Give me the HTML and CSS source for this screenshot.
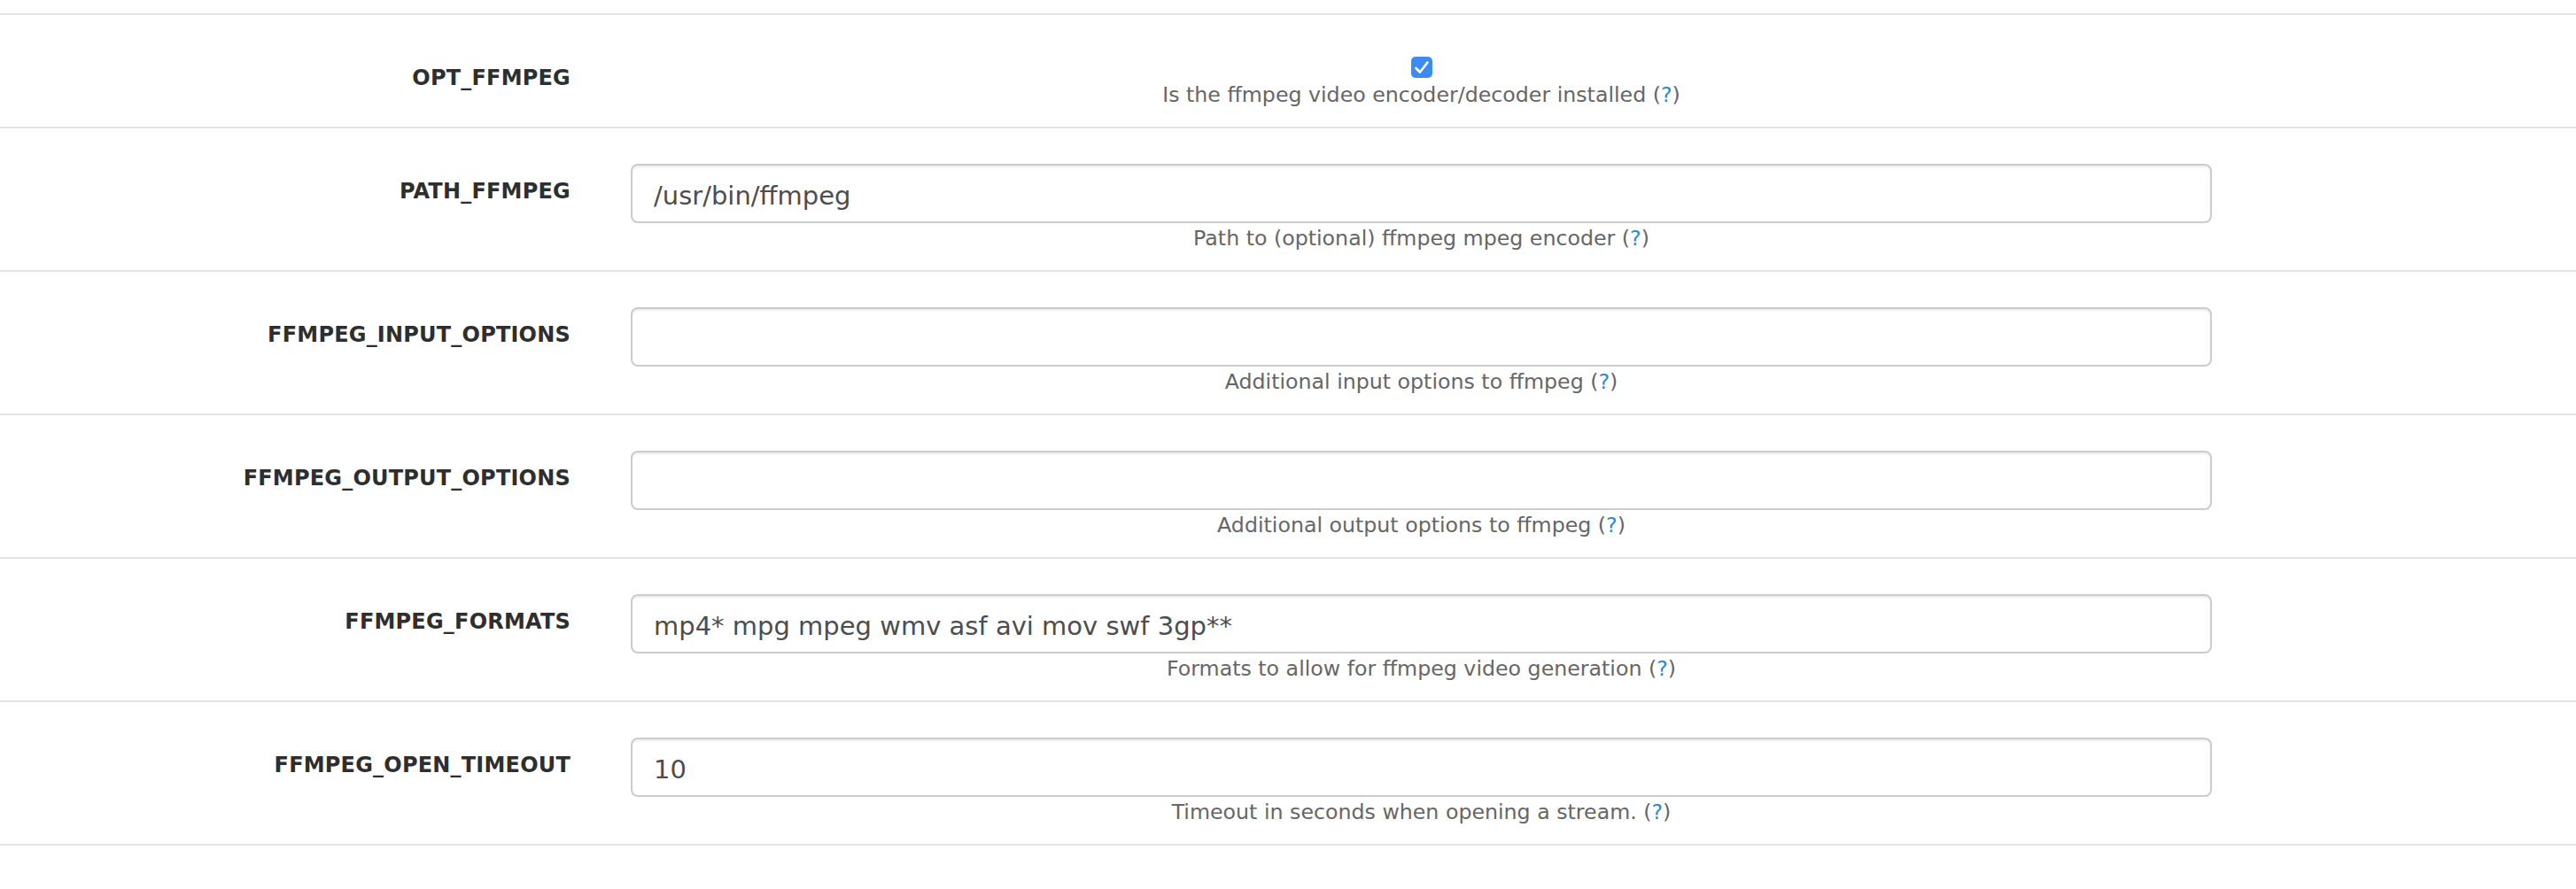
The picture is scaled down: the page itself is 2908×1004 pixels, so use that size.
FILE: index.html
```html
<!DOCTYPE html>
<html lang="en">
<head>
    <meta charset="UTF-8">
    <meta name="viewport" content="width=device-width, initial-scale=1.0">
    <title>Options - Images</title>
    <link rel="stylesheet" href="styles.css">
</head>
<body>
    <form class="options">
        <div class="option">
            <label class="name" for="opt_ffmpeg">OPT_FFMPEG</label>
            <div class="value">
                <span class="check" id="opt_ffmpeg">
                    <svg width="24" height="24" viewBox="0 0 24 24"><path d="M5.5 13 L10 17.5 L18.5 6.5" fill="none" stroke="#fff" stroke-width="2.6" stroke-linecap="round" stroke-linejoin="round"/></svg>
                </span>
                <p class="help">Is the ffmpeg video encoder/decoder installed (<a href="#">?</a>)</p>
            </div>
        </div>
        <div class="option">
            <label class="name" for="path_ffmpeg">PATH_FFMPEG</label>
            <div class="value">
                <input type="text" id="path_ffmpeg" value="/usr/bin/ffmpeg">
                <p class="help">Path to (optional) ffmpeg mpeg encoder (<a href="#">?</a>)</p>
            </div>
        </div>
        <div class="option">
            <label class="name" for="ffmpeg_input_options">FFMPEG_INPUT_OPTIONS</label>
            <div class="value">
                <input type="text" id="ffmpeg_input_options" value="">
                <p class="help">Additional input options to ffmpeg (<a href="#">?</a>)</p>
            </div>
        </div>
        <div class="option">
            <label class="name" for="ffmpeg_output_options">FFMPEG_OUTPUT_OPTIONS</label>
            <div class="value">
                <input type="text" id="ffmpeg_output_options" value="">
                <p class="help">Additional output options to ffmpeg (<a href="#">?</a>)</p>
            </div>
        </div>
        <div class="option">
            <label class="name" for="ffmpeg_formats">FFMPEG_FORMATS</label>
            <div class="value">
                <input type="text" id="ffmpeg_formats" value="mp4* mpg mpeg wmv asf avi mov swf 3gp**">
                <p class="help">Formats to allow for ffmpeg video generation (<a href="#">?</a>)</p>
            </div>
        </div>
        <div class="option">
            <label class="name" for="ffmpeg_open_timeout">FFMPEG_OPEN_TIMEOUT</label>
            <div class="value">
                <input type="text" id="ffmpeg_open_timeout" value="10">
                <p class="help">Timeout in seconds when opening a stream. (<a href="#">?</a>)</p>
            </div>
        </div>
    </form>
</body>
</html>
```

FILE: styles.css
```css
body {
    margin: 0;
    font-family: "DejaVu Sans", Verdana, sans-serif;
    font-size: 24px;
    color: #333;
    background: #fff;
}
.options {
    padding-top: 15px;
}
.option {
    display: grid;
    grid-template-columns: 644px 1785px;
    column-gap: 68px;
    padding: 40px 0 19px;
    border-top: 2px solid #e3e3e3;
}
.option:last-child {
    border-bottom: 2px solid #e3e3e3;
}
.name {
    text-align: right;
    font-weight: bold;
    line-height: 34px;
    padding-top: 14px;
    color: #2e2e2e;
    letter-spacing: 0.2px;
}
.value {
    text-align: center;
}
.check {
    display: block;
    width: 24px;
    height: 24px;
    margin: 7px auto 2px;
    background: #3a8bf4;
    border-radius: 5px;
}
.check svg {
    display: block;
}
input[type="text"] {
    display: block;
    box-sizing: border-box;
    width: 100%;
    height: 67px;
    margin: 0;
    padding: 5px 24px 0;
    font-family: "DejaVu Sans", Verdana, sans-serif;
    font-size: 29px;
    color: #4d4d4d;
    border: 2px solid #ccc;
    border-radius: 8px;
    box-shadow: inset 0 2px 2px rgba(0, 0, 0, 0.075);
    outline: none;
}
.help {
    margin: 0;
    font-size: 23.7px;
    line-height: 34px;
    color: #666;
}
.help a {
    color: #2a8ad4;
    text-decoration: none;
}
```
